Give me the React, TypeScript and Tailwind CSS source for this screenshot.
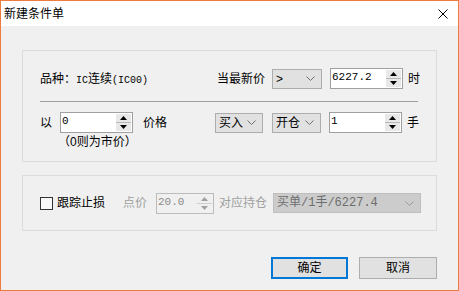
const cjk = "font-['Liberation_Sans','Noto_Sans_CJK_SC',sans-serif]";
const mono = "font-['Liberation_Mono','Noto_Sans_CJK_SC',monospace]";

function Chevron({ color = "#707070" }: { color?: string }) {
  return (
    <svg width="9" height="5" viewBox="0 0 9 5" className="shrink-0">
      <polyline points="0.5,0.5 4.5,4.5 8.5,0.5" fill="none" stroke={color} strokeWidth="1" />
    </svg>
  );
}

function Select({ label, w, disabled }: { label: string; w: string; disabled?: boolean }) {
  return (
    <div
      className={`${w} h-[20px] flex items-center justify-between pl-[3px] pr-[6px] border ${
        disabled ? "border-[#bfbfbf] bg-[#cccccc] text-[#6d6d6d]" : "border-[#adadad] bg-[#e1e1e1] text-black"
      }`}
    >
      <span className={`text-[12px] leading-none ${disabled ? mono : ""}`}>{label}</span>
      <Chevron color={disabled ? "#9a9a9a" : "#707070"} />
    </div>
  );
}

function Arrow({ up, color }: { up?: boolean; color: string }) {
  return (
    <svg width="7" height="4" viewBox="0 0 7 4">
      <polygon points={up ? "3.5,0 7,4 0,4" : "0,0 7,0 3.5,4"} fill={color} />
    </svg>
  );
}

function Spin({ value, w, disabled }: { value: string; w: string; disabled?: boolean }) {
  return (
    <div
      className={`${w} h-[21px] flex border ${
        disabled ? "border-[#bcbcbc] bg-[#f0f0f0] text-[#8a8a8a]" : "border-[#a0a0a0] bg-white text-black"
      }`}
    >
      <span className={`flex-1 pl-[1px] pt-[1px] text-[11px] leading-[14px] ${mono}`}>{value}</span>
      <div className="w-[15px] flex flex-col my-[1px] mr-[1px]">
        <div className={`flex-1 flex items-center justify-center border-b ${disabled ? "bg-[#f0f0f0] border-[#cfcfcf]" : "bg-[#e8e8e8] border-[#b8b8b8]"}`}>
          <Arrow up color={disabled ? "#a0a0a0" : "#000"} />
        </div>
        <div className={`flex-1 flex items-center justify-center ${disabled ? "bg-[#f0f0f0]" : "bg-[#e8e8e8]"}`}>
          <Arrow color={disabled ? "#a0a0a0" : "#000"} />
        </div>
      </div>
    </div>
  );
}

export default function App() {
  return (
    <div className={`w-[459px] h-[291px] border border-[#ef7b3e] bg-[#f0f0f0] flex flex-col text-[12px] text-black ${cjk}`}>
      <div className="h-[25px] bg-white flex items-center justify-between pl-[3px] pr-[10px]">
        <span className="text-[12px]">新建条件单</span>
        <svg width="10" height="10" viewBox="0 0 10 10">
          <path d="M0.5,0.5 L9.5,9.5 M9.5,0.5 L0.5,9.5" stroke="#000" strokeWidth="1" />
        </svg>
      </div>

      <div className="flex flex-col pl-[21px] pr-[21px]">
        {/* group 1 */}
        <div className="mt-[24px] h-[112px] border border-[#dcdcdc] flex flex-col pl-[17px]">
          <div className="mt-[17px] flex items-center h-[21px]">
            <span className="w-[177px]">
              品种：<span className={`${mono} text-[10px]`}>IC</span>连续<span className={`${mono} text-[10px]`}>(IC00)</span>
            </span>
            <span className="w-[55px]">当最新价</span>
            <Select label=">" w="w-[50px]" />
            <div className="ml-[8px]">
              <Spin value="6227.2" w="w-[73px]" />
            </div>
            <span className="ml-[5px]">时</span>
          </div>
          <div className="mt-[12px] w-[378px] h-[1px] bg-[#a0a0a0]" />
          <div className="mt-[10px] flex items-center h-[21px]">
            <span className="w-[20px]">以</span>
            <Spin value="0" w="w-[73px]" />
            <span className="ml-[10px] w-[72px]">价格</span>
            <Select label="买入" w="w-[48px]" />
            <div className="ml-[9px]">
              <Select label="开仓" w="w-[49px]" />
            </div>
            <div className="ml-[8px]">
              <Spin value="1" w="w-[73px]" />
            </div>
            <span className="ml-[5px]">手</span>
          </div>
          <span className="ml-[18px] mt-[1px] leading-[16px]">（0则为市价）</span>
        </div>

        {/* group 2 */}
        <div className="mt-[13px] h-[56px] border border-[#dcdcdc] flex items-center pl-[17px]">
          <div className="w-[13px] h-[13px] border border-[#333333] bg-[#f7f7f7]" />
          <span className="ml-[4px] w-[66px]">跟踪止损</span>
          <span className="w-[33px] text-[#a0a0a0]">点价</span>
          <Spin value="20.0" w="w-[58px]" disabled />
          <span className="ml-[5px] w-[54px] text-[#a0a0a0]">对应持仓</span>
          <Select label="买单/1手/6227.4" w="w-[148px]" disabled />
        </div>

        <div className="mt-[26px] flex justify-end gap-[11px]">
          <button className="w-[77px] h-[22px] border-2 border-[#0078d7] bg-[#e1e1e1] text-[12px] leading-none">确定</button>
          <button className="w-[78px] h-[22px] border border-[#adadad] bg-[#e1e1e1] text-[12px] leading-none">取消</button>
        </div>
      </div>
    </div>
  );
}
